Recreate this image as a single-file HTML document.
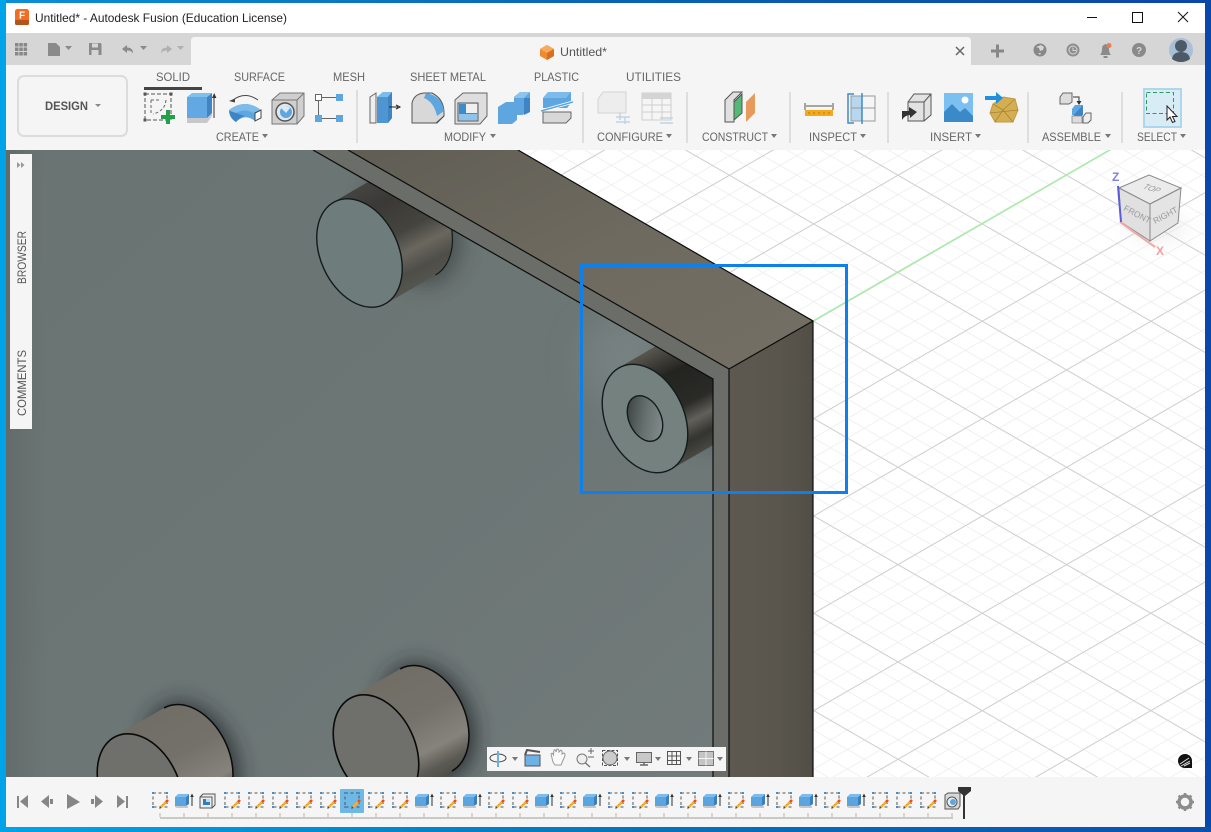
<!DOCTYPE html>
<html><head><meta charset="utf-8"><title>Untitled* - Autodesk Fusion</title>
<style>
html,body{margin:0;padding:0;width:1211px;height:832px;overflow:hidden;background:#fff}
svg{display:block;position:absolute;left:0;top:0}
text{font-family:"Liberation Sans",sans-serif;font-size:12px;fill:#666}
</style></head><body>
<svg width="1211" height="832" viewBox="0 0 1211 832" xmlns="http://www.w3.org/2000/svg">
<defs>
<linearGradient id="deskB" x1="0" y1="0" x2="1" y2="0"><stop offset="0" stop-color="#00a4e6"/><stop offset=".5" stop-color="#0676bb"/><stop offset="1" stop-color="#0a4fae"/></linearGradient>
<linearGradient id="deskT" x1="0" y1="0" x2="1" y2="0"><stop offset="0" stop-color="#0a8fd8"/><stop offset=".5" stop-color="#0a64b4"/><stop offset="1" stop-color="#0a46a8"/></linearGradient>
<pattern id="gMinA" width="200" height="16.86" patternUnits="userSpaceOnUse" patternTransform="translate(898 466.7) rotate(30)"><line x1="0" x2="200" y1="0" y2="0" stroke="#ececec" stroke-width="1.6"/></pattern>
<pattern id="gMinB" width="200" height="16.86" patternUnits="userSpaceOnUse" patternTransform="translate(898 466.7) rotate(-30)"><line x1="0" x2="200" y1="0" y2="0" stroke="#ececec" stroke-width="1.6"/></pattern>
<pattern id="gMajA" width="200" height="84.3" patternUnits="userSpaceOnUse" patternTransform="translate(898 466.7) rotate(30)"><line x1="0" x2="200" y1="0" y2="0" stroke="#cfcfcf" stroke-width="2"/></pattern>
<pattern id="gMajB" width="200" height="84.3" patternUnits="userSpaceOnUse" patternTransform="translate(898 466.7) rotate(-30)"><line x1="0" x2="200" y1="0" y2="0" stroke="#cfcfcf" stroke-width="2"/></pattern>
<linearGradient id="panel" x1="0" y1="0" x2="1" y2="1"><stop offset="0" stop-color="#6a7472"/><stop offset=".6" stop-color="#6c7675"/><stop offset="1" stop-color="#727b7a"/></linearGradient>
<linearGradient id="panelEdge" x1="0" y1="0" x2="1" y2="0"><stop offset="0" stop-color="#4c5452" stop-opacity=".28"/><stop offset="1" stop-color="#4c5452" stop-opacity="0"/></linearGradient>
<linearGradient id="top" x1="0" y1="0" x2="1" y2="1"><stop offset="0" stop-color="#605d54"/><stop offset=".5" stop-color="#6e6a60"/><stop offset="1" stop-color="#736f64"/></linearGradient>
<linearGradient id="right" x1="0" y1="0" x2="1" y2="0"><stop offset="0" stop-color="#5d5950"/><stop offset=".6" stop-color="#5a564d"/><stop offset="1" stop-color="#514e46"/></linearGradient>
<linearGradient id="bodyDark" gradientUnits="userSpaceOnUse" x1="-26" y1="-51" x2="26" y2="51"><stop offset="0" stop-color="#44433f"/><stop offset=".2" stop-color="#3a3935"/><stop offset=".5" stop-color="#45443f"/><stop offset=".68" stop-color="#6a675f"/><stop offset=".85" stop-color="#4e4d48"/><stop offset="1" stop-color="#555650"/></linearGradient>
<linearGradient id="bodyWash" gradientUnits="userSpaceOnUse" x1="-26" y1="-51" x2="26" y2="51"><stop offset="0" stop-color="#55534c"/><stop offset=".25" stop-color="#232320"/><stop offset=".55" stop-color="#2a2a27"/><stop offset=".7" stop-color="#62605a"/><stop offset=".85" stop-color="#33332f"/><stop offset="1" stop-color="#4a4b45"/></linearGradient>
<linearGradient id="bodyLight" gradientUnits="userSpaceOnUse" x1="-26" y1="-51" x2="26" y2="51"><stop offset="0" stop-color="#716e66"/><stop offset=".4" stop-color="#74716a"/><stop offset=".72" stop-color="#85837b"/><stop offset=".88" stop-color="#5c5a54"/><stop offset="1" stop-color="#4c4c47"/></linearGradient>
<linearGradient id="hole" x1="0" y1="0" x2="1" y2="1"><stop offset="0" stop-color="#2f3634"/><stop offset=".5" stop-color="#66716f"/><stop offset="1" stop-color="#8b9695"/></linearGradient>
<filter id="b10" x="-60%" y="-60%" width="220%" height="220%"><feGaussianBlur stdDeviation="10"/></filter>
<filter id="b16" x="-60%" y="-60%" width="220%" height="220%"><feGaussianBlur stdDeviation="18"/></filter>
<clipPath id="vp"><rect x="6" y="150" width="1199" height="627"/></clipPath>
<clipPath id="pc"><polygon points="6,150 313,150 713,379 713,777 6,777"/></clipPath>

<g id="sk">
<rect x="-8" y="-8" width="14" height="14" fill="none" stroke="#555" stroke-width="1" stroke-dasharray="3 2.5"/>
<g fill="#3e8fd6"><rect x="-9" y="-9" width="2" height="2"/><rect x="5" y="-9" width="2" height="2"/><rect x="-9" y="5" width="2" height="2"/></g>
<path d="M0 6 L6 0" stroke="#f0b030" stroke-width="2.6"/><path d="M5 1 L7 -1" stroke="#e84a2a" stroke-width="2.6"/><path d="M-2 8 l1.500-2 1 1z" fill="#444"/>
</g>
<g id="ex">
<path d="M-8 5 L5 5 L5 7 L-6 7 L-8 6z" fill="#c7c7c7"/>
<path d="M-8 -4 L3 -4 L3 5 L-8 5z" fill="#5aa4e0"/><path d="M3 -4 L6 -7 L6 3 L3 5z" fill="#3b7fbe"/><path d="M-8 -4 L-5 -7 L6 -7 L3 -4z" fill="#7dbcea"/>
<path d="M9 -6 V5" stroke="#333" stroke-width="1"/><path d="M7.200 -4 L9 -7.500 L10.800 -4z" fill="#333"/>
</g>
<g id="sh">
<path d="M-7 -4 L-4 -7 L8 -7 L8 4 L5 7 L-7 7z" fill="#eee" stroke="#555" stroke-width="1"/><path d="M-7 -4 L5 -4 L5 7" fill="none" stroke="#555"/>
<path d="M-4 -2 H3 V4 H-4z" fill="#bcdcf4"/><path d="M-4 -2 H-1 V1 H3 V4 H-4z" fill="#2f7fc0"/>
</g>
</defs>

<!-- desktop border -->
<rect width="1211" height="832" fill="url(#deskT)"/>
<rect x="0" y="0" width="6" height="832" fill="#00a2e8"/>
<rect x="1205" y="0" width="6" height="832" fill="#0a47ab"/>
<rect x="0" y="827" width="1211" height="5" fill="url(#deskB)"/>

<!-- title bar -->
<rect x="6" y="3" width="1199" height="30" fill="#fff"/>
<rect x="15" y="9" width="14" height="16" rx="2.500" fill="#f26c21"/><rect x="15" y="20" width="14" height="5" rx="1.500" fill="#b3541c"/>
<text x="19" y="18.500" style="font-size:10px;font-weight:bold;fill:#fff">F</text>
<text x="35" y="22" textLength="252" lengthAdjust="spacingAndGlyphs" style="fill:#222">Untitled* - Autodesk Fusion (Education License)</text>
<path d="M1087 17.500H1097" stroke="#111" stroke-width="1"/>
<rect x="1132.500" y="12.500" width="10" height="10" fill="none" stroke="#111" stroke-width="1"/>
<path d="M1178 12L1188 22M1188 12L1178 22" stroke="#111" stroke-width="1"/>

<!-- tab row -->
<rect x="6" y="33" width="1199" height="32" fill="#d6d6d6"/>
<path d="M191 65V41q0-4 4-4H967q4 0 4 4V65z" fill="#f5f5f5"/>
<g fill="#888"><rect x="15" y="43" width="3.500" height="3.500"/><rect x="19.300" y="43" width="3.500" height="3.500"/><rect x="23.600" y="43" width="3.500" height="3.500"/><rect x="15" y="47.500" width="3.500" height="3.500"/><rect x="19.300" y="47.500" width="3.500" height="3.500"/><rect x="23.600" y="47.500" width="3.500" height="3.500"/><rect x="15" y="52" width="3.500" height="3.500"/><rect x="19.300" y="52" width="3.500" height="3.500"/><rect x="23.600" y="52" width="3.500" height="3.500"/></g>
<path d="M48 43H56L60 47V56H48z" fill="#8a8a8a"/><path d="M65 46H72L68.500 50z" fill="#8a8a8a"/>
<path d="M89 43H100.500L101.500 44V55H89z" fill="#8a8a8a"/><rect x="92" y="43.500" width="6" height="4" fill="#d6d6d6"/><rect x="91.500" y="50" width="7" height="5" fill="#d6d6d6"/>
<path d="M122 49l5-4v2.500c4 0 6 2 6 6-1.500-2.500-3-3-6-3v2.500z" fill="#8a8a8a"/><path d="M140 46H147L143.500 50z" fill="#8a8a8a"/>
<path d="M172 49l-5-4v2.500c-4 0-6 2-6 6 1.500-2.500 3-3 6-3v2.500z" fill="#b0b0b0"/><path d="M177 46H184L180.500 50z" fill="#b0b0b0"/>
<!-- doc title -->
<path d="M547 45L554 49V56L547 60L540 56V49z" fill="#f08a30"/><path d="M540 49L547 53L554 49L547 45z" fill="#f7a95c"/><path d="M547 53V60L554 56V49z" fill="#d96f1e"/>
<text x="560" y="56" textLength="47" lengthAdjust="spacingAndGlyphs" style="fill:#555">Untitled*</text>
<path d="M956 47L964 55M964 47L956 55" stroke="#666" stroke-width="1.500"/>
<path d="M991 51H1004M997.500 44.500V57.500" stroke="#888" stroke-width="3"/>
<circle cx="1040" cy="50" r="6.500" fill="#888"/><path d="M1036 47l3 1 1 3 3-1 1-3-3-2zM1038 53l2 2 1-2z" fill="#d6d6d6"/>
<circle cx="1073" cy="50" r="6.500" fill="#8e8e8e"/><circle cx="1073" cy="50" r="4" fill="none" stroke="#d6d6d6"/><path d="M1073 47.500V50.500H1076" stroke="#d6d6d6" fill="none"/>
<path d="M1100 55q2-2 2-6 0-4 3.500-5 3.500 1 3.500 5 0 4 2 6z" fill="#8a8a8a"/><rect x="1103.500" y="56" width="4" height="2" fill="#8a8a8a"/><circle cx="1109" cy="45.500" r="2.500" fill="#f07a50"/>
<circle cx="1139" cy="50" r="7" fill="#8a8a8a"/><text x="1136" y="54" style="font-size:10px;font-weight:bold;fill:#d6d6d6">?</text>
<circle cx="1181" cy="50" r="12" fill="#a9bfd6"/><circle cx="1181" cy="46" r="6" fill="#4c5a68"/><path d="M1172 59q1-7 9-7 8 0 9 7-4 3-9 3-5 0-9-3z" fill="#4c5a68"/>

<!-- toolbar -->
<rect x="6" y="65" width="1199" height="85" fill="#f5f5f5"/>
<rect x="18" y="76" width="109" height="60" rx="6" fill="#f5f5f5" stroke="#dcdcdc" stroke-width="2"/>
<text x="45" y="110" textLength="43" lengthAdjust="spacingAndGlyphs" style="font-weight:bold;fill:#555">DESIGN</text>
<path d="M95 104H101L98 107z" fill="#888"/>
<text x="156" y="81" textLength="34" lengthAdjust="spacingAndGlyphs">SOLID</text>
<rect x="144" y="87" width="58" height="3" fill="#444"/>
<text x="234" y="81" textLength="51" lengthAdjust="spacingAndGlyphs">SURFACE</text>
<text x="333" y="81" textLength="32" lengthAdjust="spacingAndGlyphs">MESH</text>
<text x="410" y="81" textLength="76" lengthAdjust="spacingAndGlyphs">SHEET METAL</text>
<text x="534" y="81" textLength="45" lengthAdjust="spacingAndGlyphs">PLASTIC</text>
<text x="626" y="81" textLength="55" lengthAdjust="spacingAndGlyphs">UTILITIES</text>

<text x="216" y="141" textLength="43" lengthAdjust="spacingAndGlyphs">CREATE</text><path d="M262 134H268L265 138z" fill="#777"/>
<text x="444" y="141" textLength="42" lengthAdjust="spacingAndGlyphs">MODIFY</text><path d="M490 134H496L493 138z" fill="#777"/>
<text x="597" y="141" textLength="66" lengthAdjust="spacingAndGlyphs">CONFIGURE</text><path d="M666 134H672L669 138z" fill="#777"/>
<text x="702" y="141" textLength="66" lengthAdjust="spacingAndGlyphs">CONSTRUCT</text><path d="M771 134H777L774 138z" fill="#777"/>
<text x="809" y="141" textLength="48" lengthAdjust="spacingAndGlyphs">INSPECT</text><path d="M860 134H866L863 138z" fill="#777"/>
<text x="930" y="141" textLength="42" lengthAdjust="spacingAndGlyphs">INSERT</text><path d="M975 134H981L978 138z" fill="#777"/>
<text x="1042" y="141" textLength="59" lengthAdjust="spacingAndGlyphs">ASSEMBLE</text><path d="M1105 134H1111L1108 138z" fill="#777"/>
<text x="1137" y="141" textLength="40" lengthAdjust="spacingAndGlyphs">SELECT</text><path d="M1180 134H1186L1183 138z" fill="#777"/>
<g stroke="#dedede" stroke-width="2"><path d="M357 90V143M583 92V143M687 92V143M790 92V143M888 92V143M1028 92V143M1122 92V143"/></g>

<!-- create -->
<rect x="145" y="94" width="26" height="26" fill="none" stroke="#555" stroke-dasharray="4 2"/>
<g fill="#555"><rect x="143.500" y="92.500" width="3" height="3"/><rect x="169.500" y="92.500" width="3" height="3"/><rect x="143.500" y="118.500" width="3" height="3"/></g>
<path d="M151 100H160M151 100V113M166 100Q165 111 153 114" fill="none" stroke="#666" stroke-dasharray="3 2"/>
<path d="M161 117H175M168 110V124" stroke="#22a04a" stroke-width="4"/>
<path d="M187 123V117H207L212 112V116L207 123z" fill="#c8c8c8"/>
<path d="M187 97H207V118H187z" fill="#62a8e2"/><path d="M207 97L212 93V113L207 118z" fill="#3f84c4"/><path d="M187 97L192 93H212L207 97z" fill="#82bfec"/>
<path d="M214 95V118" stroke="#333" stroke-width="1"/><path d="M212 98L214.200 93L216.400 98z" fill="#333"/>
<path d="M233 100Q245 91 258 100" fill="none" stroke="#444"/><path d="M229 101l6-2.500v4z" fill="#444"/>
<path d="M229 110Q245 98 261 110L255 121Q245 113 236 122Q229 118 229 110Z" fill="#5ea6e0"/>
<path d="M229 110Q245 98 261 110L253 113Q245 108 236 113Z" fill="#7dbcea"/>
<path d="M229 111Q230 118 236 122Q240 117 245 116L236 113Z" fill="#3c84c4"/>
<path d="M255 113L261 110V118L255 121z" fill="#fff" stroke="#444"/>
<path d="M272 100L280 93H304V116L297 124H272z" fill="#cfcfcf" stroke="#777"/><path d="M272 100H297V124M297 100L304 93" fill="none" stroke="#777"/>
<circle cx="285" cy="112" r="9" fill="#dfe8ee" stroke="#555" stroke-width="1.500"/><circle cx="286" cy="112" r="6" fill="#5ea6e0"/><path d="M281 108A6 6 0 0 1 290 108L286 113z" fill="#dfe8ee"/>
<rect x="315.500" y="94.500" width="6" height="6" fill="#fff" stroke="#666"/><rect x="336" y="94" width="7" height="7" fill="#5ea6e0"/><rect x="315" y="115" width="7" height="7" fill="#5ea6e0"/><rect x="336" y="115" width="7" height="7" fill="#5ea6e0"/>
<path d="M322 97.500H336M318.500 101V115M322 118.500H336" stroke="#666"/>

<!-- modify -->
<path d="M370 123V97L376 93V123z" fill="#eee" stroke="#666"/><path d="M377 97L383 92H392V118L388 123H377z" fill="#4d96d2"/><path d="M377 97L383 92H392L388 97z" fill="#7dbcea"/><path d="M388 97L392 92V118L388 123z" fill="#3f84c4"/>
<path d="M389 107H398M396 105L400 107L396 109" fill="none" stroke="#222"/>
<path d="M412 123V103Q414 94 424 93H432Q444 99 444 113V116L437 123z" fill="#d8d8d8" stroke="#555"/>
<path d="M426 93Q442 96 444 111L437 116Q434 102 424 98z" fill="#5ea6e0"/><path d="M436 123L444 116" stroke="#555"/>
<path d="M455 100L463 93H487V116L480 124H455z" fill="#dedede" stroke="#666"/><path d="M458 103H478V121H458z" fill="#bcdcf4" stroke="#555"/><path d="M459 104H466V113H477V120H459z" fill="#3f8ac8"/><path d="M466 104H477V113H466z" fill="#f0f0f0"/><path d="M459 114H477V120H459z" fill="#8cc4ee"/>
<path d="M498 107L506 102H514V97L520 92H530V112L522 115H517V120L512 124H498z" fill="#5ea6e0"/><path d="M514 98L520 92H530L524 98z" fill="#8cc4ee"/><path d="M524 98H530V112L524 115z" fill="#3f84c4"/>
<path d="M543 98L548 92H571V103L567 108H543z" fill="#5ea6e0"/><path d="M543 98L548 92H571L566 98z" fill="#7dbcea"/>
<path d="M541 111L573 102" stroke="#fff" stroke-width="3"/><path d="M541 111L573 102" stroke="#5ea6e0" stroke-width="1.500"/><path d="M543 112H571V118L566 123H543z" fill="#d8d8d8" stroke="#666"/>

<!-- configure -->
<path d="M598 99L603 92H626V113H598V99Z" fill="#ededed" stroke="#d4d4d4"/><path d="M616 117H630M616 122H630" stroke="#c0d3e2" stroke-width="1.500"/><path d="M620 113V120M625 117V124" stroke="#c0d3e2" stroke-width="1.500"/>
<rect x="642" y="93" width="29" height="27" fill="#f5f5f5" stroke="#cfcfcf"/><rect x="642" y="93" width="29" height="6" fill="#d4d4d4"/><path d="M642 105H671M642 112H671M652 99V120M662 99V120" stroke="#cfcfcf"/>
<path d="M660 118H673M660 123H673" stroke="#c0d3e2" stroke-width="1.500"/>

<!-- construct -->
<path d="M725 100L733 92H742L734 100V122L725 122z" fill="#e0e0e0" stroke="#555"/>
<path d="M734 102L742 94V113L734 120z" fill="#55b878" stroke="#555"/>
<path d="M746 102L755 93V113L746 122z" fill="#e69a5c"/>

<!-- inspect -->
<path d="M805 103V110M833 103V110M806 106H832" stroke="#555"/><rect x="805" y="110" width="28" height="6" fill="#f5a81c"/>
<path d="M809 112v2M814 112v2M819 112v2M824 112v2M829 112v2" stroke="#b27a10"/>
<rect x="851" y="96" width="11" height="25" fill="#b7d6f0"/><path d="M851 96H875V121H851zM851 108H875M862 96V121" fill="none" stroke="#999"/>
<path d="M854 94H848V123H854" fill="none" stroke="#3f8ac8" stroke-width="1.500"/><path d="M862 93V124" stroke="#3f8ac8" stroke-width="1.500"/>

<!-- insert -->
<path d="M908 102L914 94H931V115L924 121H908z" fill="#e2e2e2" stroke="#555"/><path d="M908 102H924V121M924 102L931 94" fill="none" stroke="#555"/>
<path d="M902 111L909 111V107L917 112L910 118V115Q905 115 902 120z" fill="#333"/>
<rect x="944" y="93" width="29" height="29" fill="#7cc0f2"/><circle cx="965" cy="100" r="3.500" fill="#fff"/><path d="M944 122V112L952 104L960 112L965 108L973 116V122z" fill="#3a8ac8"/>
<path d="M993 104L1003 97L1015 99L1018 110L1013 122H995L990 113z" fill="#d4ae52" stroke="#c09a40"/><path d="M993 104L1003 110L1015 99M1003 110L1013 122M1003 110L995 122M990 113L1018 110" stroke="#a88434" stroke-width=".8" fill="none"/>
<path d="M985 96H996V92L1003 98L996 104V100H985z" fill="#1f8fe0"/>

<!-- assemble -->
<path d="M1060 97L1063 93H1072V102L1069 104H1060z" fill="#ddd" stroke="#666"/><path d="M1073 97H1079V102" fill="none" stroke="#333"/><path d="M1076.500 101H1081.500L1079 105z" fill="#333"/>
<path d="M1072 109L1075 105H1083V115H1072z" fill="#5ea6e0"/><path d="M1083 105V115L1080 117H1072" fill="#3f84c4"/>
<path d="M1072 116H1082V123H1072z" fill="#dcdcdc" stroke="#888" stroke-width=".8"/><path d="M1083 117L1086 113H1091V120L1088 123H1083z" fill="#eee" stroke="#666"/>

<!-- select -->
<rect x="1144" y="89" width="37" height="38" fill="#d8ecf6" stroke="#aed6ec" stroke-width="2"/>
<rect x="1146.500" y="92.500" width="27" height="21" fill="none" stroke="#2c9a62" stroke-dasharray="4 2.500"/>
<path d="M1167 106V120L1170 117L1172.500 122.500L1175 121.500L1172.500 116.500H1177z" fill="#fff" stroke="#222"/>

<!-- viewport -->
<g clip-path="url(#vp)">
<rect x="6" y="150" width="1199" height="627" fill="#fff"/>
<rect x="6" y="150" width="1199" height="627" fill="url(#gMinA)"/>
<rect x="6" y="150" width="1199" height="627" fill="url(#gMinB)"/>
<rect x="6" y="150" width="1199" height="627" fill="url(#gMajA)"/>
<rect x="6" y="150" width="1199" height="627" fill="url(#gMajB)"/>
<path d="M813 321L1113 148" stroke="#a8eda8" stroke-width="1.500"/>

<!-- model -->
<polygon points="6,150 313,150 713,379 713,777 6,777" fill="url(#panel)"/>
<rect x="6" y="150" width="40" height="627" fill="url(#panelEdge)"/>
<g clip-path="url(#pc)">
<ellipse cx="640" cy="360" rx="60" ry="50" fill="#8a9796" opacity=".35" filter="url(#b16)"/>
<!-- contact shadows -->
<ellipse cx="413" cy="226" rx="44" ry="62" transform="rotate(-25 413 226)" fill="#2f3635" opacity=".55" filter="url(#b10)"/>
<ellipse cx="192" cy="761" rx="44" ry="62" transform="rotate(-25 192 761)" fill="#20262a" opacity=".8" filter="url(#b10)"/>
<ellipse cx="428" cy="722" rx="44" ry="62" transform="rotate(-25 428 722)" fill="#20262a" opacity=".8" filter="url(#b10)"/>
<ellipse cx="698" cy="392" rx="42" ry="60" transform="rotate(-25 698 392)" fill="#2f3635" opacity=".3" filter="url(#b10)"/>

<!-- cylinder top -->
<g transform="translate(359.500 253)">
<path d="M-26-51L24-80A39 57 -25 0 1 76 22L26 51Z" fill="url(#bodyDark)"/>
<path d="M24-80A39 57 -25 0 1 76 22" fill="none" stroke="#151a1a" stroke-width="1.200"/>
<ellipse rx="39" ry="57" transform="rotate(-25)" fill="#6f7c7c" stroke="#121a1c" stroke-width="1.400"/>
</g>

<!-- cylinder washer -->
<g transform="translate(645 418.500)">
<path d="M-26-51L24-80A39 57 -25 0 1 76 22L26 51Z" fill="url(#bodyWash)"/>
<ellipse rx="39" ry="57" transform="rotate(-25)" fill="#74817f" stroke="#121a1c" stroke-width="1.400"/>
<ellipse rx="16" ry="24" transform="rotate(-25)" fill="url(#hole)" stroke="#121a1c" stroke-width="1.400"/>
</g>

<!-- cylinder bottom right -->
<g transform="translate(376 749)">
<path d="M-26-51L24-80A39 57 -25 0 1 76 22L26 51Z" fill="url(#bodyLight)"/>
<path d="M24-80A39 57 -25 0 1 76 22" fill="none" stroke="#0a0a0a" stroke-width="1.500"/>
<ellipse rx="39" ry="57" transform="rotate(-25)" fill="#6f706b" stroke="#0a0a0a" stroke-width="1.600"/>
</g>

<!-- cylinder bottom left -->
<g transform="translate(140 788)">
<path d="M-26-51L24-80A39 57 -25 0 1 76 22L26 51Z" fill="url(#bodyLight)"/>
<path d="M24-80A39 57 -25 0 1 76 22" fill="none" stroke="#0a0a0a" stroke-width="1.500"/>
<ellipse rx="39" ry="57" transform="rotate(-25)" fill="#6f706b" stroke="#0a0a0a" stroke-width="1.600"/>
</g>
</g>

<!-- lip + faces -->
<polygon points="313,150 348,150 729,369 729,777 713,777 713,379" fill="#6b6d69"/>
<polygon points="348,150 518,150 813,321 729,369" fill="url(#top)"/>
<polygon points="729,369 813,321 813,777 729,777" fill="url(#right)"/>
<path d="M313 150L713 379V777M348 150L729 369V777M518 150L813 321V777M729 369L813 321" fill="none" stroke="#0c0c0c" stroke-width="1.200"/>

<!-- selection box -->
<rect x="581.500" y="265.500" width="265" height="227" fill="none" stroke="#0f80ea" stroke-width="3"/>

<!-- view cube -->
<path d="M1122 222L1150 241L1190 232L1165 210z" fill="#d8d8d8" opacity=".5" filter="url(#b10)"/>
<path d="M1119 188L1149 175L1181 188L1150 204z" fill="#ebebeb" stroke="#888"/>
<path d="M1119 188L1150 204V241L1121 222z" fill="#e0e0e0" stroke="#888"/>
<path d="M1150 204L1181 188L1178 223L1150 241z" fill="#e4e4e4" stroke="#888"/>
<path d="M1120 222L1155 247" stroke="#f0a8a8" stroke-width="2"/>
<path d="M1121 222L1118 186" stroke="#5c5cd8" stroke-width="2"/>
<text x="1112" y="181" style="font-size:12px;font-weight:bold;fill:#8080e0">Z</text>
<text x="1156" y="255" style="font-size:12px;font-weight:bold;fill:#f4a0a0">X</text>
<text transform="translate(1142 188) rotate(18) skewX(-30)" style="font-size:8px;fill:#999">TOP</text>
<text transform="translate(1123 210) rotate(28)" style="font-size:8.500px;fill:#999">FRONT</text>
<text transform="translate(1155 224) rotate(-28)" style="font-size:8.500px;fill:#999">RIGHT</text>

<!-- corner logo -->
<circle cx="1185" cy="761" r="7" fill="#111"/><rect x="1185" y="761" width="7" height="7" fill="#111"/>
<path d="M1180 764L1189 758M1181 766L1190 761M1184 766L1190 763" stroke="#ddd" stroke-width="1"/>
</g>

<!-- side panel -->
<rect x="10" y="154" width="22" height="275" fill="#f5f5f5"/>
<path d="M17 162L20.500 165L17 168zM21 162L24.500 165L21 168z" fill="#999"/>
<text transform="translate(26 284) rotate(-90)" textLength="53" lengthAdjust="spacingAndGlyphs" style="fill:#555">BROWSER</text>
<text transform="translate(26 416) rotate(-90)" textLength="66" lengthAdjust="spacingAndGlyphs" style="fill:#555">COMMENTS</text>

<!-- nav bar -->
<rect x="487" y="747" width="239" height="24" fill="#f5f5f5"/>
<ellipse cx="498" cy="758" rx="8" ry="4" fill="none" stroke="#444"/><path d="M498 751V767" stroke="#6cb0e4" stroke-width="2"/>
<path d="M512 757H518L515 761z" fill="#777"/>
<rect x="525" y="755" width="15" height="11" fill="#6db2e6" stroke="#555"/><path d="M525 755L527 750L540 752" fill="none" stroke="#555" stroke-width="2"/>
<path d="M553 762L551 754Q552 752 553.500 755L554 750Q555.500 749 556 752L557 749Q559 749 559 752L561 750Q562.500 751 562 754L564 753Q566 754 564 758L561 765H555z" fill="#fafafa" stroke="#999"/>
<circle cx="582" cy="759" r="5" fill="#eee" stroke="#777"/><path d="M585.500 763L590 767" stroke="#777" stroke-width="1.500"/>
<path d="M588 751H594M591 748V754M588 757H594" stroke="#666"/>
<rect x="602.500" y="750.500" width="15" height="15" fill="none" stroke="#555" stroke-dasharray="3 1.500"/><circle cx="610" cy="758" r="7" fill="#ccc" stroke="#666"/>
<path d="M624 757H630L627 761z" fill="#777"/>
<rect x="636.500" y="752.500" width="15" height="10" fill="#c8c8c8" stroke="#666"/><path d="M640 765H648M644 762V765" stroke="#666" stroke-width="1.500"/>
<path d="M655 757H661L658 761z" fill="#777"/>
<rect x="667.500" y="751.500" width="13" height="13" fill="#f5f5f5" stroke="#555"/><path d="M667.500 756H680.500M667.500 760.500H680.500M672 751.500V764.500M676.500 751.500V764.500" stroke="#555"/>
<path d="M686 757H692L689 761z" fill="#777"/>
<rect x="698.500" y="751.500" width="15" height="14" fill="#c4c4c4" stroke="#777"/><path d="M698.500 758.500H713.500M706 751.500V765.500" stroke="#f5f5f5"/>
<path d="M717 757H723L720 761z" fill="#777"/>

<!-- timeline -->
<rect x="6" y="777" width="1199" height="50" fill="#f5f5f5"/>
<g fill="#868686"><rect x="17" y="796" width="2" height="12"/><path d="M28 795V808L20 801.500z"/><path d="M41 801.500L49 795V808zM50 799H53V804H50z"/><path d="M67 794L80 802L67 809z"/><path d="M91 799H94V804H91zM95 795L103 801.500L95 808z"/><path d="M117 795L125 801.500L117 808zM126 796H128V808H126z"/></g>
<rect x="340" y="789" width="24" height="24" rx="1" fill="#6db8e4"/>
<rect x="160" y="817" width="793" height="2" fill="#c9c9c9"/>
<path d="M160 813v4M184 813v4M208 813v4M232 813v4M256 813v4M280 813v4M304 813v4M328 813v4M352 813v4M376 813v4M400 813v4M424 813v4M448 813v4M472 813v4M496 813v4M520 813v4M544 813v4M568 813v4M592 813v4M616 813v4M640 813v4M664 813v4M688 813v4M712 813v4M736 813v4M760 813v4M784 813v4M808 813v4M832 813v4M856 813v4M880 813v4M904 813v4M928 813v4M952 813v4" stroke="#d4c8c0" stroke-width="1.500"/>
<use href="#sk" x="161" y="801"/><use href="#ex" x="183" y="801"/><use href="#sh" x="207" y="801"/>
<use href="#sk" x="233" y="801"/><use href="#sk" x="257" y="801"/><use href="#sk" x="281" y="801"/><use href="#sk" x="305" y="801"/><use href="#sk" x="329" y="801"/><use href="#sk" x="353" y="801"/><use href="#sk" x="377" y="801"/><use href="#sk" x="401" y="801"/>
<use href="#ex" x="423" y="801"/><use href="#sk" x="449" y="801"/><use href="#ex" x="471" y="801"/><use href="#sk" x="497" y="801"/><use href="#sk" x="521" y="801"/><use href="#ex" x="543" y="801"/><use href="#sk" x="569" y="801"/><use href="#ex" x="591" y="801"/><use href="#sk" x="617" y="801"/><use href="#sk" x="641" y="801"/><use href="#ex" x="663" y="801"/><use href="#sk" x="689" y="801"/><use href="#ex" x="711" y="801"/><use href="#sk" x="737" y="801"/><use href="#ex" x="759" y="801"/><use href="#sk" x="785" y="801"/><use href="#ex" x="807" y="801"/><use href="#sk" x="833" y="801"/><use href="#ex" x="855" y="801"/><use href="#sk" x="881" y="801"/><use href="#sk" x="905" y="801"/><use href="#sk" x="929" y="801"/>
<path d="M945 795L948 793H960V806L958 809H945z" fill="#d8d8d8" stroke="#555"/><circle cx="952" cy="802" r="5" fill="#e8f0f6" stroke="#555"/><circle cx="953" cy="802" r="3" fill="#5ea6e0"/>
<rect x="963" y="790" width="2" height="29" fill="#333"/><path d="M958 787H971V791L965 796H964L958 791z" fill="#333"/>
<g transform="translate(1185 802)"><circle r="6" fill="none" stroke="#8c8c8c" stroke-width="3.500"/><path d="M0-9V-5M0 5V9M-9 0H-5M5 0H9M-6.400-6.400L-3.500-3.500M3.500 3.500L6.400 6.400M6.400-6.400L3.500-3.500M-3.500 3.500L-6.400 6.400" stroke="#8c8c8c" stroke-width="2.500"/></g>
</svg>
</body></html>
